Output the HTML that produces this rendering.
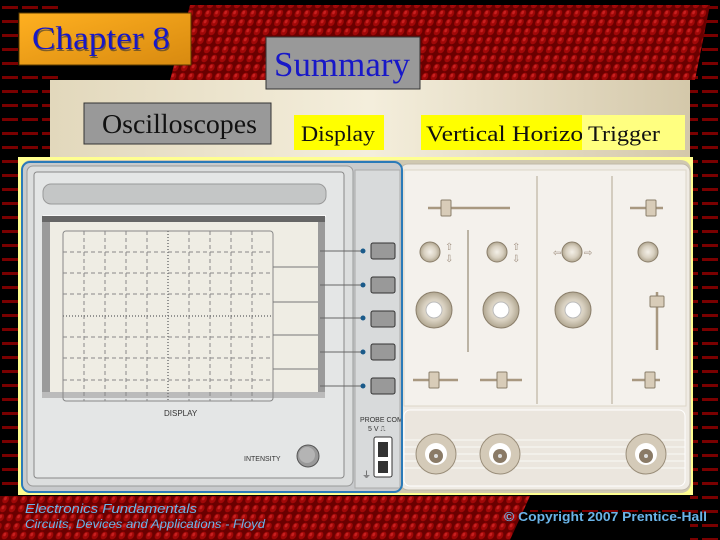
<!DOCTYPE html>
<html><head><style>
body{margin:0;width:720px;height:540px;overflow:hidden;background:#000;}
svg{display:block}
text{font-family:"Liberation Serif",serif}
.s{font-family:"Liberation Sans",sans-serif}
</style></head><body>
<svg width="720" height="540" viewBox="0 0 720 540" xmlns="http://www.w3.org/2000/svg">
<defs>
<pattern id="dots" width="9" height="9" patternUnits="userSpaceOnUse" patternTransform="skewX(-15)">
<rect width="9" height="9" fill="#6a0000"/><ellipse cx="4.5" cy="4.5" rx="3.2" ry="3.8" fill="#a00808"/><ellipse cx="4" cy="3.5" rx="1.4" ry="1.8" fill="#c82020"/>
</pattern>
<pattern id="dash" width="20" height="14" patternUnits="userSpaceOnUse">
<rect width="20" height="14" fill="#000"/><rect x="2" y="6" width="16" height="3" fill="#7a0000"/>
</pattern>
<linearGradient id="gold" x1="0" y1="0" x2="1" y2="1"><stop offset="0" stop-color="#ffb020"/><stop offset="1" stop-color="#d88a10"/></linearGradient>
<linearGradient id="beige" x1="0" y1="0" x2="1" y2="0"><stop offset="0" stop-color="#e2d8bc"/><stop offset=".5" stop-color="#f4eedc"/><stop offset="1" stop-color="#d4c8aa"/></linearGradient>
<radialGradient id="knob"><stop offset="0" stop-color="#f4f0e8"/><stop offset=".6" stop-color="#d8d0c0"/><stop offset="1" stop-color="#b0a690"/></radialGradient>
</defs>
<rect width="720" height="540" fill="#000"/>
<rect x="0" y="0" width="60" height="540" fill="url(#dash)"/>
<rect x="690" y="0" width="30" height="540" fill="url(#dash)"/>
<polygon points="190,5 710,5 695,80 170,80" fill="url(#dots)"/>
<polygon points="0,496 530,496 510,540 0,540" fill="url(#dots)"/>
<rect x="530" y="500" width="190" height="12" fill="url(#dash)"/>
<rect x="50" y="80" width="640" height="415" fill="url(#beige)"/>
<rect x="19" y="13" width="172" height="52" fill="url(#gold)" stroke="#5a3a00"/>
<text x="33" y="51" font-size="33" fill="#333" opacity=".6" textLength="138" lengthAdjust="spacingAndGlyphs">Chapter 8</text>
<text x="32" y="49" font-size="33" fill="#1818c8" textLength="138" lengthAdjust="spacingAndGlyphs">Chapter 8</text>
<rect x="266" y="37" width="154" height="52" fill="#999" stroke="#333"/>
<text x="274" y="76" font-size="35" fill="#1818c8" textLength="136" lengthAdjust="spacingAndGlyphs">Summary</text>
<rect x="84" y="103" width="187" height="41" fill="#999" stroke="#333"/>
<text x="102" y="133" font-size="27" fill="#111" textLength="155" lengthAdjust="spacingAndGlyphs">Oscilloscopes</text>
<rect x="294" y="115" width="90" height="35" fill="#ffff00"/>
<text x="301" y="141" font-size="22" fill="#111" textLength="74" lengthAdjust="spacingAndGlyphs">Display</text>
<rect x="421" y="115" width="164" height="35" fill="#ffff00"/>
<text x="426" y="141" font-size="22" fill="#111" textLength="170" lengthAdjust="spacingAndGlyphs">Vertical Horizon</text>
<rect x="582" y="115" width="103" height="35" fill="#ffff80"/>
<text x="588" y="141" font-size="22" fill="#111" textLength="72" lengthAdjust="spacingAndGlyphs">Trigger</text>
<rect x="18" y="157" width="675" height="338" fill="#ffff90"/>
<rect x="21" y="160" width="670" height="333" rx="10" fill="#d0c8b0"/>
<rect x="400" y="164" width="290" height="326" rx="8" fill="#efebe4" stroke="#c0b8a8"/>
<rect x="404" y="170" width="282" height="236" fill="#f4f1ec" stroke="#ddd6c8"/>
<line x1="468" y1="230" x2="468" y2="352" stroke="#a89e8c" stroke-width="1.5"/>
<line x1="537" y1="176" x2="537" y2="404" stroke="#c8c0b0" stroke-width="1.5"/>
<line x1="612" y1="176" x2="612" y2="404" stroke="#c8c0b0" stroke-width="1.5"/>
<rect x="404" y="410" width="281" height="76" rx="6" fill="#ebe6de" stroke="#fff"/>
<g stroke="#fff" stroke-width=".8"><line x1="404" y1="440" x2="685" y2="440"/><line x1="404" y1="447" x2="685" y2="447"/><line x1="404" y1="454" x2="685" y2="454"/><line x1="404" y1="461" x2="685" y2="461"/><line x1="404" y1="468" x2="685" y2="468"/></g>
<g stroke="#a89880" stroke-width="2.5">
<line x1="428" y1="208" x2="510" y2="208"/><line x1="630" y1="208" x2="663" y2="208"/>
<line x1="657" y1="292" x2="657" y2="350"/>
<line x1="413" y1="380" x2="458" y2="380"/><line x1="480" y1="380" x2="522" y2="380"/><line x1="632" y1="380" x2="660" y2="380"/>
</g>
<g fill="#d8ccb8" stroke="#8a7e6a">
<rect x="441" y="200" width="10" height="16" rx="1"/><rect x="646" y="200" width="10" height="16" rx="1"/>
<rect x="650" y="296" width="14" height="11" rx="1"/>
<rect x="429" y="372" width="10" height="16" rx="1"/><rect x="497" y="372" width="10" height="16" rx="1"/><rect x="645" y="372" width="10" height="16" rx="1"/>
</g>
<g fill="url(#knob)" stroke="#8a7e6a">
<circle cx="430" cy="252" r="10"/><circle cx="497" cy="252" r="10"/><circle cx="572" cy="252" r="10"/><circle cx="648" cy="252" r="10"/>
<circle cx="434" cy="310" r="18"/><circle cx="501" cy="310" r="18"/><circle cx="573" cy="310" r="18"/>
</g>
<g fill="#fff" stroke="#bbb"><circle cx="434" cy="310" r="8"/><circle cx="501" cy="310" r="8"/><circle cx="573" cy="310" r="8"/></g>
<g font-size="10" fill="#a09080"><text x="445" y="250" class="s">⇧</text><text x="445" y="262" class="s">⇩</text><text x="512" y="250" class="s">⇧</text><text x="512" y="262" class="s">⇩</text><text x="553" y="256" class="s">⇦</text><text x="584" y="256" class="s">⇨</text></g>
<g><circle cx="436" cy="454" r="20" fill="#d4cab8" stroke="#9a8e7a"/><circle cx="436" cy="454" r="11" fill="#fff"/><circle cx="436" cy="456" r="7" fill="#8a7a66"/><circle cx="436" cy="456" r="2" fill="#ddd"/>
<circle cx="500" cy="454" r="20" fill="#d4cab8" stroke="#9a8e7a"/><circle cx="500" cy="454" r="11" fill="#fff"/><circle cx="500" cy="456" r="7" fill="#8a7a66"/><circle cx="500" cy="456" r="2" fill="#ddd"/>
<circle cx="646" cy="454" r="20" fill="#d4cab8" stroke="#9a8e7a"/><circle cx="646" cy="454" r="11" fill="#fff"/><circle cx="646" cy="456" r="7" fill="#8a7a66"/><circle cx="646" cy="456" r="2" fill="#ddd"/></g>
<rect x="22" y="162" width="380" height="330" rx="8" fill="#c8cacc"/>
<rect x="27" y="166" width="326" height="320" rx="6" fill="#dcdede" stroke="#999"/>
<rect x="34" y="172" width="310" height="306" rx="3" fill="#e4e6e6" stroke="#888"/>
<rect x="43" y="184" width="283" height="20" rx="8" fill="#c4c6c6" stroke="#999"/>
<rect x="43" y="215" width="283" height="2" fill="#f8f8f8"/>
<rect x="42" y="216" width="283" height="182" rx="3" fill="#9a9a9a"/>
<rect x="42" y="216" width="283" height="6" fill="#666"/>
<rect x="42" y="392" width="283" height="6" fill="#bbb"/>
<rect x="50" y="222" width="268" height="170" fill="#efede4"/>
<rect x="63" y="231" width="210" height="170" rx="3" fill="none" stroke="#888"/>
<g stroke="#888" stroke-dasharray="4,3">
<line x1="84" y1="231" x2="84" y2="401"/><line x1="105" y1="231" x2="105" y2="401"/><line x1="126" y1="231" x2="126" y2="401"/><line x1="147" y1="231" x2="147" y2="401"/><line x1="189" y1="231" x2="189" y2="401"/><line x1="210" y1="231" x2="210" y2="401"/><line x1="231" y1="231" x2="231" y2="401"/><line x1="252" y1="231" x2="252" y2="401"/>
<line x1="63" y1="252" x2="273" y2="252"/><line x1="63" y1="273" x2="273" y2="273"/><line x1="63" y1="294" x2="273" y2="294"/><line x1="63" y1="337" x2="273" y2="337"/><line x1="63" y1="358" x2="273" y2="358"/><line x1="63" y1="380" x2="273" y2="380"/>
</g>
<line x1="63" y1="316" x2="273" y2="316" stroke="#777" stroke-width="1.5" stroke-dasharray="1,2"/>
<line x1="168" y1="231" x2="168" y2="401" stroke="#777" stroke-width="1.5" stroke-dasharray="1,2"/>
<g stroke="#777"><line x1="273" y1="267" x2="318" y2="267"/><line x1="273" y1="302" x2="318" y2="302"/><line x1="273" y1="335" x2="318" y2="335"/><line x1="273" y1="369" x2="318" y2="369"/></g>
<text x="164" y="416" font-size="8" class="s" fill="#333">DISPLAY</text>
<text x="244" y="461" font-size="7" class="s" fill="#333">INTENSITY</text>
<circle cx="308" cy="456" r="11" fill="#999" stroke="#555"/><circle cx="307" cy="455" r="8" fill="#b4b4b4"/>
<rect x="355" y="170" width="45" height="318" fill="#d8dadb" stroke="#aaa"/>
<g stroke="#666"><line x1="320" y1="251" x2="365" y2="251"/><line x1="320" y1="285" x2="365" y2="285"/><line x1="320" y1="318" x2="365" y2="318"/><line x1="320" y1="352" x2="365" y2="352"/><line x1="320" y1="386" x2="365" y2="386"/></g>
<g fill="#999" stroke="#333">
<rect x="371" y="243" width="24" height="16" rx="2"/><rect x="371" y="277" width="24" height="16" rx="2"/><rect x="371" y="311" width="24" height="16" rx="2"/><rect x="371" y="344" width="24" height="16" rx="2"/><rect x="371" y="378" width="24" height="16" rx="2"/></g>
<g fill="#1a5a8a"><circle cx="363" cy="251" r="2.5"/><circle cx="363" cy="285" r="2.5"/><circle cx="363" cy="318" r="2.5"/><circle cx="363" cy="352" r="2.5"/><circle cx="363" cy="386" r="2.5"/></g>
<text x="360" y="422" font-size="7" class="s" fill="#333">PROBE COM</text>
<text x="368" y="431" font-size="7" class="s" fill="#333">5 V  ⎍</text>
<rect x="374" y="437" width="18" height="40" rx="2" fill="#fff" stroke="#333"/>
<rect x="378" y="442" width="10" height="15" fill="#333"/><rect x="378" y="461" width="10" height="12" fill="#333"/>
<text x="362" y="478" font-size="9" class="s" fill="#333">⏚</text>
<rect x="22" y="162" width="380" height="330" rx="8" fill="none" stroke="#2a7ab8" stroke-width="2"/>
<text x="25" y="513" font-size="13" class="s" font-style="italic" fill="#6ab4e8" textLength="172" lengthAdjust="spacingAndGlyphs">Electronics Fundamentals</text>
<text x="25" y="528" font-size="12" class="s" font-style="italic" fill="#6ab4e8" textLength="240" lengthAdjust="spacingAndGlyphs">Circuits, Devices and Applications - Floyd</text>
<text x="504" y="521" font-size="13" class="s" font-weight="bold" fill="#6ab4e8" textLength="203" lengthAdjust="spacingAndGlyphs">© Copyright 2007 Prentice-Hall</text>
</svg>
</body></html>
